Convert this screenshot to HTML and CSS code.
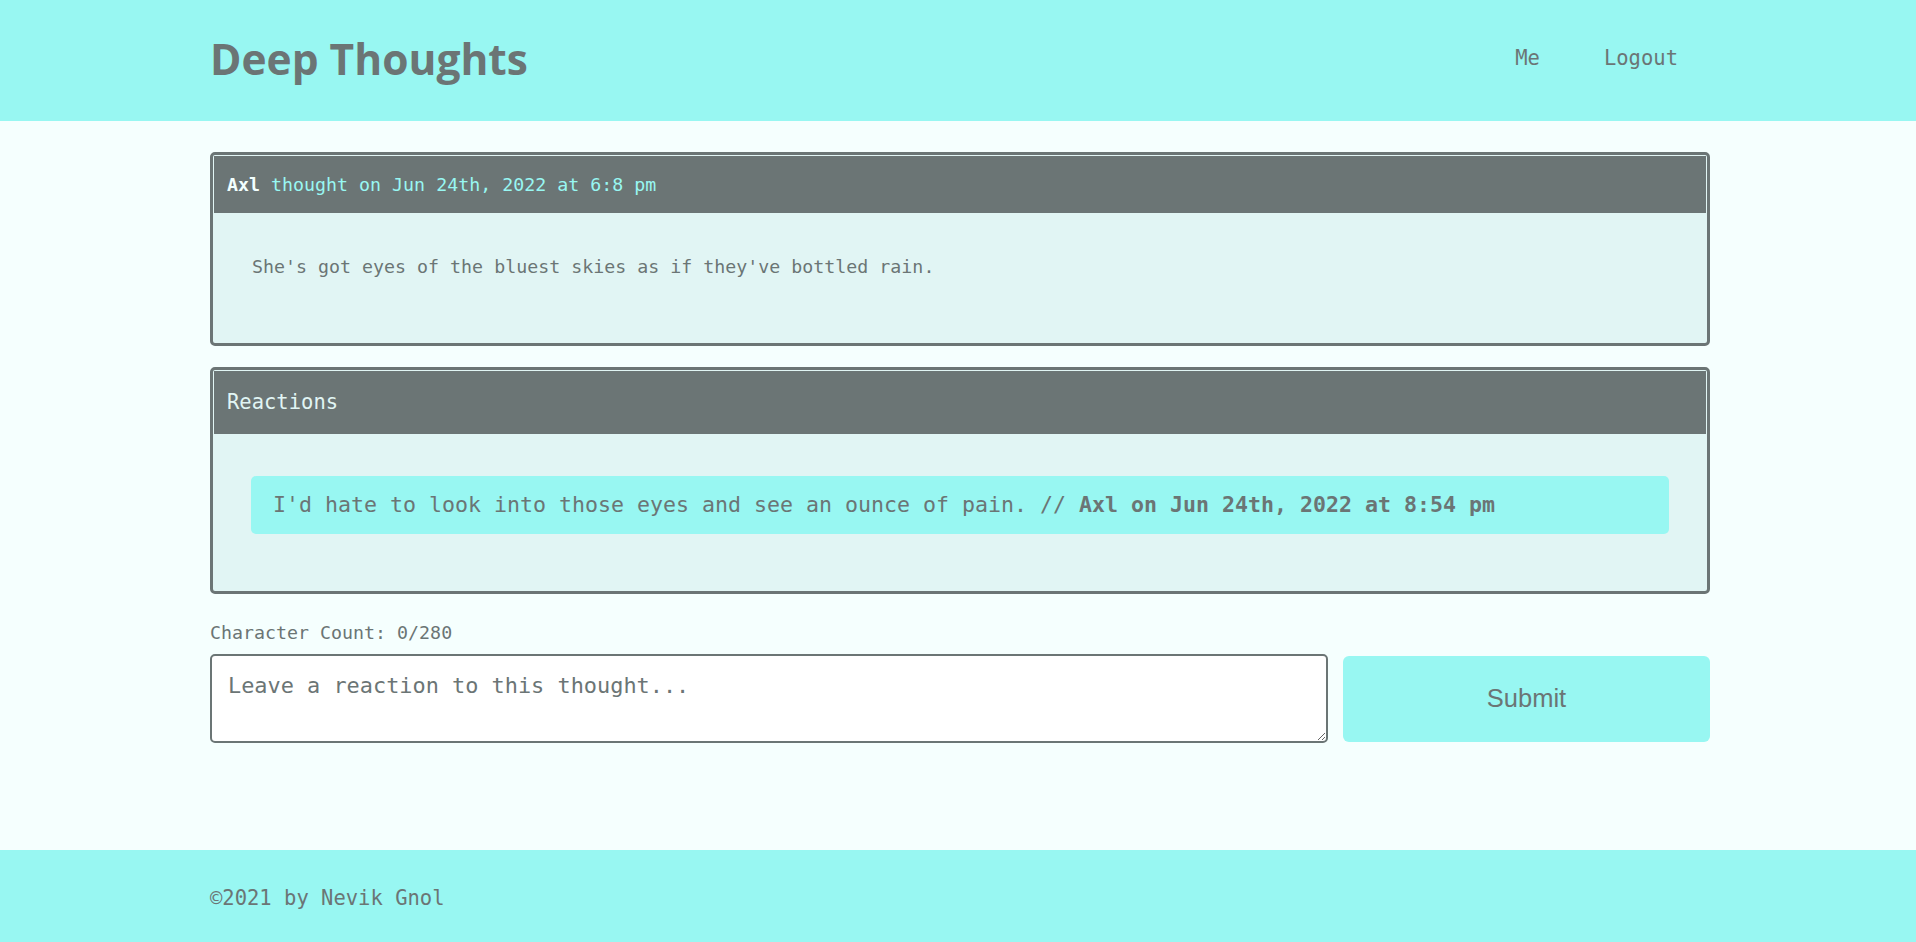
FILE: index.html
```html
<!DOCTYPE html>
<html lang="en">
<head>
<meta charset="utf-8">
<title>Deep Thoughts</title>
<link rel="stylesheet" href="styles.css">
</head>
<body>
<header class="site-header">
  <div class="container header-inner">
    <h1 class="logo">Deep Thoughts</h1>
    <nav class="nav">
      <a href="#" class="nav-link">Me</a>
      <a href="#" class="nav-link">Logout</a>
    </nav>
  </div>
</header>
<main class="main">
  <div class="container">
    <section class="card">
      <div class="card-header thought-header"><span class="author">Axl</span> thought on Jun 24th, 2022 at 6:8 pm</div>
      <div class="card-body thought-body">
        <p class="thought-text">She's got eyes of the bluest skies as if they've bottled rain.</p>
      </div>
    </section>
    <section class="card reactions">
      <div class="card-header reactions-header">Reactions</div>
      <div class="card-body reactions-body">
        <p class="pill">I'd hate to look into those eyes and see an ounce of pain. // <strong>Axl on Jun 24th, 2022 at 8:54 pm</strong></p>
      </div>
    </section>
    <form class="reaction-form">
      <p class="char-count">Character Count: 0/280</p>
      <div class="form-row">
        <textarea class="reaction-input" placeholder="Leave a reaction to this thought..."></textarea>
        <button type="button" class="submit-btn">Submit</button>
      </div>
    </form>
  </div>
</main>
<footer class="site-footer">
  <div class="container footer-text">&copy;2021 by Nevik Gnol</div>
</footer>
</body>
</html>
```

FILE: styles.css
```css
* { box-sizing: border-box; }

html, body { height: 100%; }

body {
  margin: 0;
  background: #f5fffe;
  color: #6b7575;
  font-family: "DejaVu Sans Mono", "Liberation Mono", monospace;
  display: flex;
  flex-direction: column;
  min-height: 100vh;
}

.container {
  width: 1504px;
  margin: 0 auto;
  padding-left: 4px;
}

.site-header {
  background: #98f7f2;
  height: 121px;
  display: flex;
  align-items: center;
  padding-bottom: 5px;
}

.header-inner {
  display: flex;
  align-items: center;
  justify-content: space-between;
}

.logo {
  margin: 0;
  font-family: "Open Sans", "Lato", sans-serif;
  font-weight: 700;
  font-size: 42.5px;
  line-height: 1.2;
  color: #6b7575;
}

.nav {
  display: flex;
}

.nav-link {
  color: #6b7575;
  text-decoration: none;
  font-size: 20.5px;
  line-height: 25px;
  padding: 0 32px;
}

.main {
  flex: 1;
  padding-top: 31px;
}

.card {
  border: 3px solid #6b7575;
  border-radius: 5px;
  padding: 1px;
  background: #e1f5f4;
}

.card-header {
  background: #6b7575;
  padding: 16px 13px;
  font-size: 18.3px;
  line-height: 25px;
  color: #98f7f2;
}

.author {
  color: #f2fffe;
  font-weight: 700;
}

.thought-body {
  padding: 40px 38px 62px;
}

.thought-text {
  margin: 0;
  font-size: 18.3px;
  line-height: 27px;
  color: #6b7575;
}

.reactions {
  margin-top: 21px;
}

.reactions-header {
  font-size: 20.5px;
  line-height: 29px;
  padding: 17px 13px;
  color: #e1f5f4;
}

.reactions-body {
  padding: 42px 37px 56px;
}

.pill {
  margin: 0;
  background: #98f7f2;
  border-radius: 5px;
  padding: 16px 22px;
  font-size: 21.6px;
  line-height: 26px;
  color: #6b7575;
}

.pill strong { font-weight: 700; }

.char-count {
  margin: 28px 0 10px;
  font-size: 18.3px;
  line-height: 22px;
  color: #6b7575;
}

.form-row {
  display: grid;
  grid-template-columns: 1fr 367px;
  column-gap: 15px;
  align-items: center;
}

.reaction-input {
  display: block;
  width: 100%;
  height: 89px;
  border: 2px solid #6b7575;
  border-radius: 5px;
  background: #ffffff;
  padding: 16px 16px;
  font-family: "DejaVu Sans Mono", "Liberation Mono", monospace;
  font-size: 21.9px;
  line-height: 27px;
  color: #6b7575;
}

.reaction-input::placeholder {
  color: #6b7575;
  opacity: 1;
}

.submit-btn {
  height: 86px;
  border: none;
  border-radius: 6px;
  background: #98f7f2;
  color: #6b7575;
  font-family: "Liberation Sans", Arial, sans-serif;
  font-size: 25.5px;
  cursor: pointer;
}

.site-footer {
  background: #98f7f2;
  padding: 36px 0 31px;
}

.footer-text {
  font-size: 20.5px;
  line-height: 25px;
  color: #6b7575;
}
```
